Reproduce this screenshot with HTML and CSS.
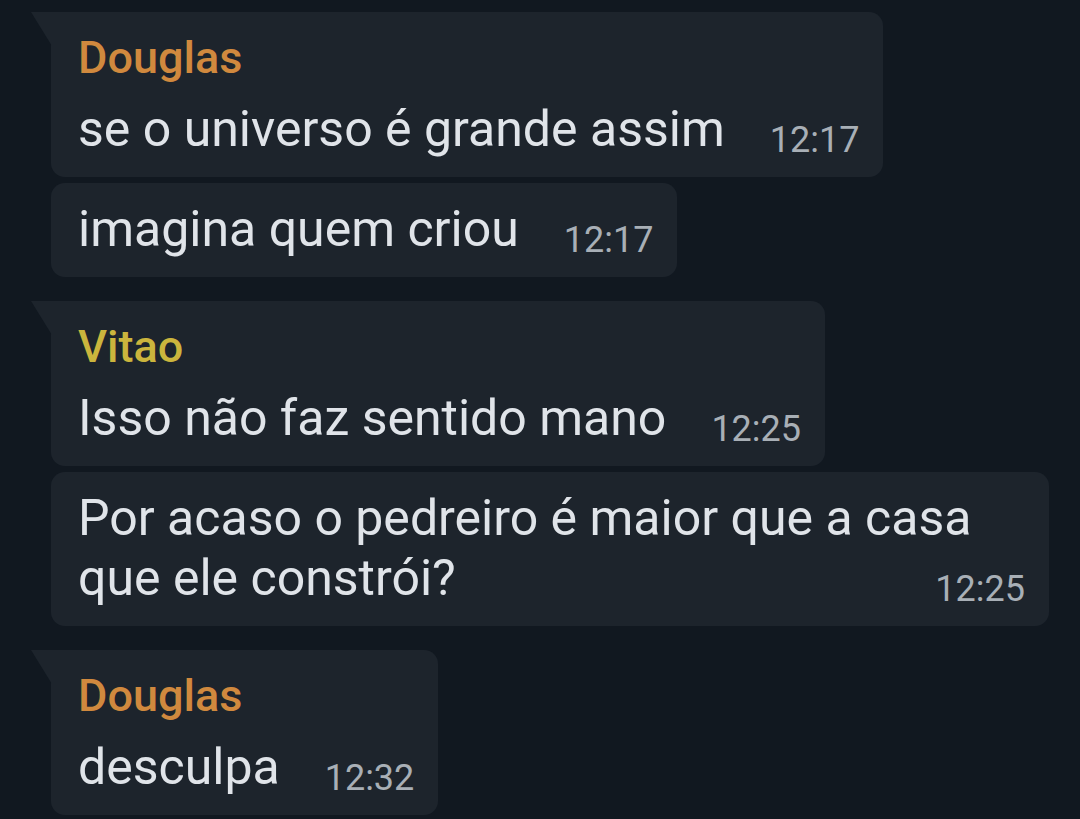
FILE: index.html
```html
<!DOCTYPE html>
<html lang="pt">
<head>
<meta charset="utf-8">
<title>Chat</title>
<link rel="stylesheet" href="styles.css">
</head>
<body>
<div class="chat">
  <div class="group">
    <div class="bubble tail">
      <div class="name douglas">Douglas</div>
      <div class="msg">se o universo é grande assim<span class="time">12:17</span></div>
    </div>
    <div class="bubble">
      <div class="msg">imagina quem criou<span class="time">12:17</span></div>
    </div>
  </div>
  <div class="group">
    <div class="bubble tail">
      <div class="name vitao">Vitao</div>
      <div class="msg">Isso não faz sentido mano<span class="time">12:25</span></div>
    </div>
    <div class="bubble">
      <div class="msg">Por acaso o pedreiro é maior que a casa que ele constrói?<span class="time">12:25</span></div>
    </div>
  </div>
  <div class="group">
    <div class="bubble tail">
      <div class="name douglas">Douglas</div>
      <div class="msg">desculpa<span class="time">12:32</span></div>
    </div>
  </div>
</div>
</body>
</html>
```
FILE: styles.css
```css
html, body {
  margin: 0;
  padding: 0;
  background: #111820;
  width: 1080px;
  height: 819px;
  overflow: hidden;
}
.chat {
  display: flex;
  flex-direction: column;
  gap: 24px;
  padding: 12px 0 0 51px;
  font-family: Roboto, "Noto Sans", sans-serif;
}
.group {
  display: flex;
  flex-direction: column;
  align-items: flex-start;
  gap: 6px;
}
.bubble {
  position: relative;
  display: inline-block;
  box-sizing: border-box;
  max-width: 998px;
  background: #1d242c;
  border-radius: 14px;
  padding: 16px 24px 18px 27px;
}
.bubble.tail {
  border-top-left-radius: 0;
}
.bubble.tail::before {
  content: "";
  position: absolute;
  left: -20px;
  top: 0;
  width: 21px;
  height: 34px;
  background: #1d242c;
  clip-path: polygon(0 0, 100% 0, 100% 100%);
}
.name {
  font-size: 45px;
  font-weight: 500;
  line-height: 60px;
  margin-bottom: 11px;
}
.douglas { color: #d0893e; }
.vitao { color: #cbb53d; }
.msg {
  font-size: 50px;
  line-height: 60px;
  color: #e0e4e9;
}
.time {
  float: right;
  font-size: 36px;
  line-height: 36px;
  margin: 23px 0 0 45px;
  color: #a8afb6;
}
```
